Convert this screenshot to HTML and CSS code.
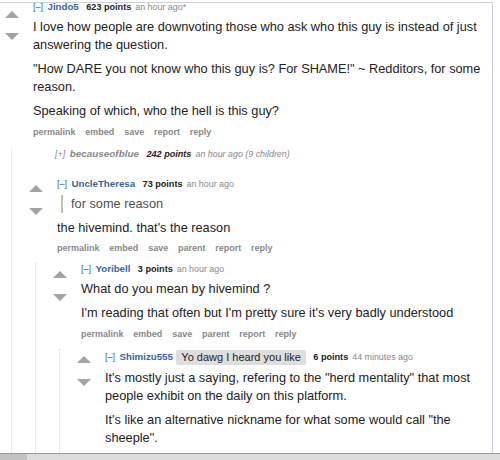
FILE: index.html
```html
<!DOCTYPE html>
<html lang="en">
<head>
<meta charset="utf-8">
<title>Comments</title>
<link rel="stylesheet" href="styles.css">
</head>
<body>
<div class="frame">
  <div class="thread">
    <div class="comment first">
      <div class="row">
        <div class="midcol"><span class="arrow up"></span><span class="arrow down"></span></div>
        <div class="entry">
          <p class="tagline"><a class="expand">[–]</a> <a class="author">Jindo5</a> <span class="score">623 points</span> <span class="time">an hour ago</span><span class="time">*</span></p>
          <div class="md">
            <p>I love how people are downvoting those who ask who this guy is instead of just answering the question.</p>
            <p>"How DARE you not know who this guy is? For SHAME!" ~ Redditors, for some reason.</p>
            <p>Speaking of which, who the hell is this guy?</p>
          </div>
          <ul class="buttons"><li>permalink</li><li>embed</li><li>save</li><li>report</li><li>reply</li></ul>
        </div>
      </div>
      <div class="child">
        <div class="comment collapsed">
          <div class="entry">
            <p class="tagline"><a class="expand">[+]</a> <a class="author">becauseofblue</a> <span class="score">242 points</span> <span class="time">an hour ago (9 children)</span></p>
          </div>
        </div>
        <div class="comment">
          <div class="row">
            <div class="midcol"><span class="arrow up"></span><span class="arrow down"></span></div>
            <div class="entry">
              <p class="tagline"><a class="expand">[–]</a> <a class="author">UncleTheresa</a> <span class="score">73 points</span> <span class="time">an hour ago</span></p>
              <div class="md">
                <blockquote><p>for some reason</p></blockquote>
                <p>the hivemind. that's the reason</p>
              </div>
              <ul class="buttons"><li>permalink</li><li>embed</li><li>save</li><li>parent</li><li>report</li><li>reply</li></ul>
            </div>
          </div>
          <div class="child">
            <div class="comment">
              <div class="row">
                <div class="midcol"><span class="arrow up"></span><span class="arrow down"></span></div>
                <div class="entry">
                  <p class="tagline"><a class="expand">[–]</a> <a class="author">Yoribell</a> <span class="score">3 points</span> <span class="time">an hour ago</span></p>
                  <div class="md">
                    <p>What do you mean by hivemind ?</p>
                    <p>I'm reading that often but I'm pretty sure it's very badly understood</p>
                  </div>
                  <ul class="buttons"><li>permalink</li><li>embed</li><li>save</li><li>parent</li><li>report</li><li>reply</li></ul>
                </div>
              </div>
              <div class="child">
                <div class="comment">
                  <div class="row">
                    <div class="midcol"><span class="arrow up"></span><span class="arrow down"></span></div>
                    <div class="entry">
                      <p class="tagline flaired"><a class="expand">[–]</a> <a class="author">Shimizu555</a> <span class="flair">Yo dawg I heard you like</span> <span class="score">6 points</span> <span class="time">44 minutes ago</span></p>
                      <div class="md">
                        <p>It's mostly just a saying, refering to the "herd mentality" that most people exhibit on the daily on this platform.</p>
                        <p>It's like an alternative nickname for what some would call "the sheeple".</p>
                      </div>
                    </div>
                  </div>
                </div>
              </div>
            </div>
          </div>
        </div>
      </div>
    </div>
  </div>
</div>
<div class="hbar"><div class="thumb"></div></div>
</body>
</html>
```
FILE: styles.css
```css
* { box-sizing: border-box; }

body {
  margin: 0;
  width: 500px;
  height: 460px;
  overflow: hidden;
  background: #fff;
  color: #222;
  font-family: "Liberation Sans", Arial, Helvetica, sans-serif;
}

.frame {
  width: 493px;
  height: 451px;
  margin-top: 2px;
  border-top: 1px solid #c8d0da;
  border-right: 1px solid #c8d0da;
  overflow: hidden;
}

.thread { margin-top: -2px; }

.row { display: flex; }

.midcol {
  flex: none;
  width: 14px;
  margin: 0 14px 0 5px;
  padding-top: 7.5px;
  display: flex;
  flex-direction: column;
  gap: 16px;
}

.first > .row > .midcol { padding-top: 10px; gap: 15px; }

.arrow {
  display: block;
  width: 0;
  height: 0;
  border-left: 7px solid transparent;
  border-right: 7px solid transparent;
}
.arrow.up { border-bottom: 7px solid #a3a3a3; }
.arrow.down { border-top: 7px solid #a3a3a3; }

.entry { flex: 1; min-width: 0; padding-right: 8px; }

.tagline {
  margin: 0;
  height: 12px;
  line-height: 12px;
  font-size: 9px;
  color: #888;
  white-space: nowrap;
}
.tagline.flaired { height: 15px; line-height: 15px; }

.expand { color: #369; margin-right: 2px; }
.author { color: #369; font-weight: bold; font-size: 9.7px; margin-right: 5px; }
.score { color: #222; font-weight: bold; font-size: 9.1px; margin-right: 1.5px; }
.time { color: #888; font-size: 8.9px; }

.flaired .author { margin-right: 1px; }

.flair {
  display: inline-block;
  vertical-align: middle;
  font-size: 11px;
  line-height: 15px;
  color: #222;
  background: #dedede;
  border-radius: 2px;
  padding: 0 5px;
  margin-right: 5px;
}

.md {
  margin-top: 5px;
  font-size: 12.75px;
  line-height: 18px;
  color: #222;
}
.md p { margin: 0; }
.md p + p,
.md blockquote + p { margin-top: 6px; }

.md blockquote {
  margin: 0 0 0 4px;
  padding: 0 8px;
  border-left: 2px solid #c5c1ad;
  color: #4f4f4f;
}

.buttons {
  list-style: none;
  margin: 4.5px 0 0;
  padding: 0;
  display: flex;
  gap: 9.8px;
  font-size: 9px;
  line-height: 14px;
  font-weight: bold;
  color: #888;
}

.child {
  margin: 3px 0 0 11px;
  padding-left: 12px;
  border-left: 1px dotted #d6d8ee;
  min-height: 460px;
}

.child > .comment { margin-top: 8px; }
.child > .comment.collapsed { margin-top: 9.5px; padding-bottom: 9.5px; }

.collapsed .entry { padding-left: 31px; }
.collapsed .tagline, .collapsed .tagline a { font-style: italic; color: #888; }
.collapsed .author { font-size: 9.9px; }
.collapsed .score { color: #222; }

.hbar {
  height: 7px;
  border-top: 1px solid #9c9c9c;
  background: #dcdcdc;
}
.hbar .thumb {
  width: 27px;
  height: 100%;
  background: #c2c2c2;
}
```
